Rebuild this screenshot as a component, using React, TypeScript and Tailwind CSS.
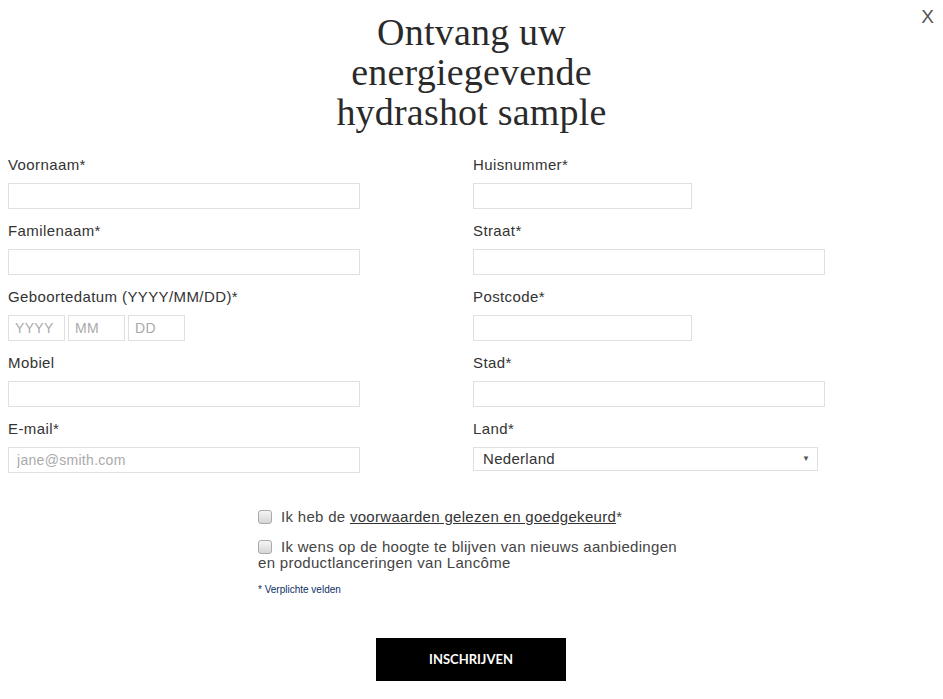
import React from 'react';

const labelCls = 'block h-5 leading-5 text-[15px] tracking-[0.4px] text-[#333] mb-2';
const inputCls =
  'block h-[26px] border border-[#e0e0e0] bg-white px-2 text-[14px] tracking-[0.3px] text-[#333] placeholder:text-[#aaa] outline-none';

const Field = ({ label, width, placeholder }: { label: string; width: string; placeholder?: string }) => (
  <div className="mb-3">
    <label className={labelCls}>{label}</label>
    <input className={`${inputCls} ${width}`} placeholder={placeholder} />
  </div>
);

const Checkbox = () => (
  <span className="inline-block align-[-2px] w-[14px] h-[14px] rounded-[3px] border border-[#a9a9a9] bg-gradient-to-b from-[#f5f5f5] to-[#d6d6d6] mr-[9px]"></span>
);

export default function App() {
  return (
    <div className="relative w-[943px] h-[699px] bg-white overflow-hidden" style={{ fontFamily: '"Liberation Sans", Arial, sans-serif' }}>
      <button className="absolute right-[9px] top-[5px] text-[19px] text-[#555] leading-6 font-light">X</button>

      <h1
        className="pt-3 text-center text-[38px] tracking-[0.2px] leading-[40px] text-[#2a2a2a]"
        style={{ fontFamily: '"Liberation Serif", "Times New Roman", serif' }}
      >
        Ontvang uw
        <br />
        energiegevende
        <br />
        hydrashot sample
      </h1>

      <div className="flex px-2 pt-[23px]">
        <div className="w-[465px] shrink-0">
          <Field label="Voornaam*" width="w-[352px]" />
          <Field label="Familenaam*" width="w-[352px]" />
          <div className="mb-3">
            <label className={labelCls}>Geboortedatum (YYYY/MM/DD)*</label>
            <div className="flex gap-[3px]">
              <input className={`${inputCls} w-[57px] px-[6px]`} placeholder="YYYY" />
              <input className={`${inputCls} w-[57px] px-[6px]`} placeholder="MM" />
              <input className={`${inputCls} w-[57px] px-[6px]`} placeholder="DD" />
            </div>
          </div>
          <Field label="Mobiel" width="w-[352px]" />
          <Field label="E-mail*" width="w-[352px]" placeholder="jane@smith.com" />
        </div>
        <div className="w-[465px] shrink-0">
          <Field label="Huisnummer*" width="w-[219px]" />
          <Field label="Straat*" width="w-[352px]" />
          <Field label="Postcode*" width="w-[219px]" />
          <Field label="Stad*" width="w-[352px]" />
          <div className="mb-3">
            <label className={labelCls}>Land*</label>
            <div className="relative w-[345px]">
              <select className="block w-full h-[24px] appearance-none border border-[#e0e0e0] bg-white pl-[9px] text-[15px] tracking-[0.3px] text-[#333] outline-none">
                <option>Nederland</option>
              </select>
              <span className="pointer-events-none absolute right-[8px] top-[6px] text-[8px] text-[#555]">▼</span>
            </div>
          </div>
        </div>
      </div>

      <div className="ml-[258px] w-[430px] pt-[24px] text-[15px] tracking-[0.3px] leading-4 text-[#444]">
        <p className="mb-[14px]">
          <Checkbox />
          Ik heb de <a className="underline text-[#333]">voorwaarden gelezen en goedgekeurd</a>*
        </p>
        <p>
          <Checkbox />
          Ik wens op de hoogte te blijven van nieuws aanbiedingen en productlanceringen van Lancôme
        </p>
        <p className="mt-[13px] text-[10px] tracking-normal leading-3 text-[#0b2f63]" style={{ fontFamily: 'Arial, "Liberation Sans", sans-serif' }}>
          * Verplichte velden
        </p>
      </div>

      <div className="pl-[376px] pt-[42px]">
        <button className="w-[190px] h-[43px] bg-black text-white text-[13px] font-bold" style={{ fontFamily: 'Lato, sans-serif' }}>
          INSCHRIJVEN
        </button>
      </div>
    </div>
  );
}
